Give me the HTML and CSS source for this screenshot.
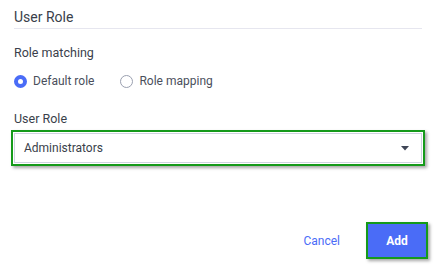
FILE: index.html
```html
<!DOCTYPE html>
<html>
<head>
<meta charset="utf-8">
<link rel="stylesheet" href="styles.css">
</head>
<body>
<div class="panel">
  <h2 class="title">User Role</h2>
  <div class="section">
    <div class="label">Role matching</div>
    <div class="radios">
      <label class="radio"><span class="dot checked"></span>Default role</label>
      <label class="radio"><span class="dot"></span>Role mapping</label>
    </div>
  </div>
  <div class="field">
    <div class="label">User Role</div>
    <div class="hl select-hl">
      <div class="select">
        <span>Administrators</span>
        <svg class="caret" width="8" height="5" viewBox="0 0 8 5"><path d="M0 0h8L4 4.5z" fill="#3f4656"/></svg>
      </div>
    </div>
  </div>
  <div class="actions">
    <button class="cancel">Cancel</button>
    <div class="hl btn-hl"><button class="add">Add</button></div>
  </div>
</div>
</body>
</html>
```
FILE: styles.css
```css
html, body { margin: 0; padding: 0; background: #fff; }
body { font-family: Roboto, "Noto Sans", sans-serif; color: #3a3f4b; width: 439px; height: 268px; overflow: hidden; }
.panel { padding: 8px 17px 0 14px; }
.title { margin: 0; font-size: 14px; font-weight: 400; color: #3a3f4b; line-height: 18px; padding-bottom: 2px; border-bottom: 1px solid #e6e6ef; }
.section { margin-top: 16px; }
.label { font-size: 12.5px; line-height: 16px; color: #3a3f4b; }
.radios { display: flex; gap: 26px; margin-top: 12px; height: 16px; align-items: center; }
.radio { display: flex; align-items: center; font-size: 12px; color: #4a4f5c; gap: 6px; }
.dot { width: 11px; height: 11px; border-radius: 50%; border: 1px solid #9aa0b0; box-sizing: content-box; }
.dot.checked { width: 5px; height: 5px; border: 4px solid #4a6cf7; background: #fff; }
.field { margin-top: 22px; }
.field .label { margin-bottom: 3px; }
.hl { border: 2px solid #159a1a; box-shadow: 2px 2px 3px rgba(0,0,0,0.35); }
.select-hl { margin-left: -3px; padding: 1px; width: 408px; }
.select { height: 28px; border: 1px solid #cfd3e0; display: flex; align-items: center; justify-content: space-between; padding: 0 12px 0 9px; font-size: 12px; color: #3a3f4b; }
.caret { display: block; }
.actions { display: flex; justify-content: flex-end; align-items: center; margin-top: 56px; gap: 26px; margin-right: -6px; }
.cancel { background: none; border: none; color: #4a6cf7; font-family: inherit; font-size: 12px; padding: 0; }
.add { display: block; width: 58px; height: 33px; background: #4a6cf7; color: #fff; border: none; font-family: inherit; font-size: 12px; font-weight: 700; }
```
